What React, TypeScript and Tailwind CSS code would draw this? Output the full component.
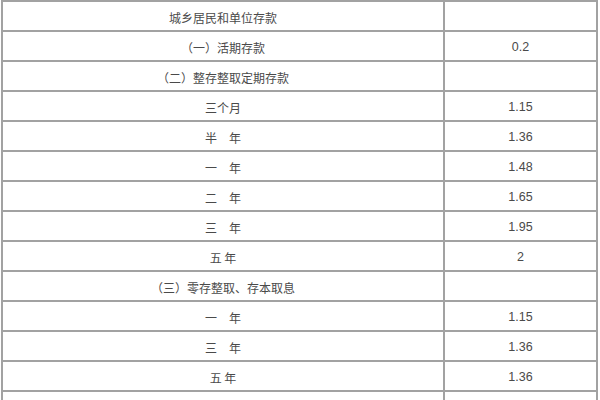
import React from "react";

const rows: [string, string][] = [
  ["城乡居民和单位存款", ""],
  ["（一）活期存款", "0.2"],
  ["（二）整存整取定期存款", ""],
  ["三个月", "1.15"],
  ["半\u3000年", "1.36"],
  ["一\u3000年", "1.48"],
  ["二\u3000年", "1.65"],
  ["三\u3000年", "1.95"],
  ["五 年", "2"],
  ["（三）零存整取、存本取息", ""],
  ["一\u3000年", "1.15"],
  ["三\u3000年", "1.36"],
  ["五 年", "1.36"],
  ["（四）定活两便", "0.6"],
];

export default function App() {
  return (
    <div className="w-[600px] h-[400px] overflow-hidden bg-white">
      <div
        className="ml-[1px] w-[597px] grid grid-cols-[442px_153px] border-l-2 border-t-2 border-[#a2a2a2] text-[#4a4a4a]"
      >
        {rows.map(([a, b], i) => (
          <React.Fragment key={i}>
            <div
              className="h-[30px] pt-[3px] flex items-center justify-center border-r-2 border-b-2 border-[#a2a2a2] text-[12px] whitespace-pre"
              style={{ fontFamily: '"Noto Sans CJK SC", "Noto Sans", sans-serif' }}
            >
              {a}
            </div>
            <div
              className="h-[30px] pt-[3px] flex items-center justify-center border-r-2 border-b-2 border-[#a2a2a2] text-[12.5px]"
              style={{ fontFamily: '"Liberation Sans", "Noto Sans CJK SC", sans-serif' }}
            >
              {b}
            </div>
          </React.Fragment>
        ))}
      </div>
    </div>
  );
}
